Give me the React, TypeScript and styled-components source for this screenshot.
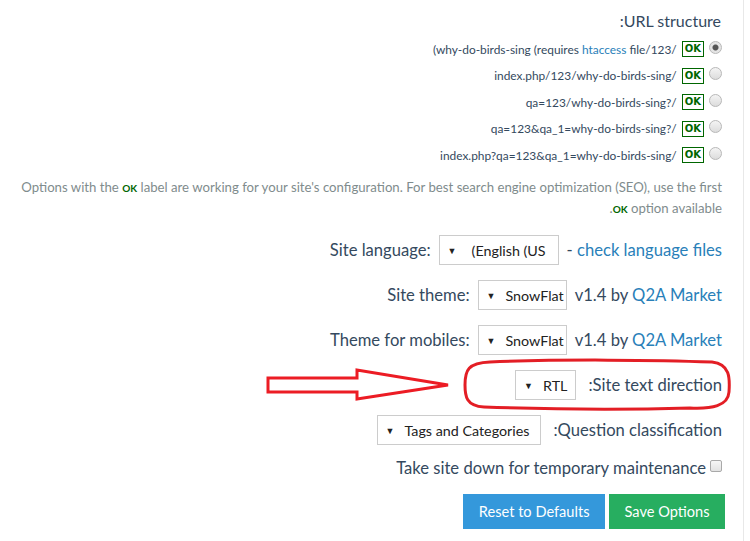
import styled, { createGlobalStyle } from 'styled-components';

const GlobalStyle = createGlobalStyle`
  html, body {
    margin: 0;
    padding: 0;
    background: #ffffff;
  }
  body {
    font-family: Lato, "Open Sans", sans-serif;
    color: #34495e;
  }
`;

interface UrlOption {
  id: string;
  before: string;
  link?: string;
  after?: string;
  checked: boolean;
}

const urlOptions: UrlOption[] = [
  { id: 'rewrite', before: '(why-do-birds-sing (requires ', link: 'htaccess', after: ' file/123/', checked: true },
  { id: 'index-path', before: 'index.php/123/why-do-birds-sing/', checked: false },
  { id: 'qa-path', before: 'qa=123/why-do-birds-sing?/', checked: false },
  { id: 'qa-params', before: 'qa=123&qa_1=why-do-birds-sing?/', checked: false },
  { id: 'index-params', before: 'index.php?qa=123&qa_1=why-do-birds-sing/', checked: false },
];

const Select = ({ value, width, padEnd = 10 }: { value: string; width: number; padEnd?: number }) => (
  <SelectBox style={{ minWidth: width, paddingRight: padEnd }}>
    <Caret>▼</Caret>
    <SelectValue>{value}</SelectValue>
  </SelectBox>
);

const App = () => {
  return (
    <>
      <GlobalStyle />
      <Page>
        <Form>
          <Title>:URL structure</Title>

          {urlOptions.map((opt) => (
            <RadioRow key={opt.id}>
              <span>
                {opt.before}
                {opt.link && <Link>{opt.link}</Link>}
                {opt.after}
              </span>
              <OkBadge>OK</OkBadge>
              <Radio checked={opt.checked} />
            </RadioRow>
          ))}

          <Note>
            <NoteLine>
              Options with the <SmallOk>OK</SmallOk> label are working for your site's configuration. For best search
              engine optimization (SEO), use the first
            </NoteLine>
            <NoteLine>
              .<SmallOk>OK</SmallOk> option available
            </NoteLine>
          </Note>

          <Fields>
            <FieldRow>
              <Label>Site language:</Label>
              <Select value="(English (US" width={120} padEnd={12} />
              <span>
                - <Link>check language files</Link>
              </span>
            </FieldRow>

            <FieldRow>
              <Label>Site theme:</Label>
              <Select value="SnowFlat" width={84} padEnd={2} />
              <span>
                v1.4 by <Link>Q2A Market</Link>
              </span>
            </FieldRow>

            <FieldRow>
              <Label>Theme for mobiles:</Label>
              <Select value="SnowFlat" width={84} padEnd={2} />
              <span>
                v1.4 by <Link>Q2A Market</Link>
              </span>
            </FieldRow>

            <FieldRow $gap={12}>
              <Select value="RTL" width={60} padEnd={8} />
              <Label>:Site text direction</Label>
            </FieldRow>

            <FieldRow $gap={12}>
              <Select value="Tags and Categories" width={164} padEnd={11} />
              <Label>:Question classification</Label>
            </FieldRow>
          </Fields>

          <CheckRow>
            <Label>Take site down for temporary maintenance</Label>
            <Checkbox />
          </CheckRow>

          <Buttons>
            <Button $color="#3498db">Reset to Defaults</Button>
            <Button $color="#27ae60">Save Options</Button>
          </Buttons>
        </Form>

        {/* red markup: arrow pointing at the direction setting */}
        <Markup width="750" height="541" viewBox="0 0 750 541">
          <polygon
            points="268,378 357,378 357,370 448,385 357,399 357,392 268,392"
            fill="none"
            stroke="#ec1c24"
            strokeWidth="3"
            strokeLinejoin="miter"
          />
          <path
            d="M490 362 C 560 359, 660 360, 712 362 C 730 364, 730 378, 729 392 C 728 406, 712 409, 690 408
               C 620 410, 540 409, 484 407 C 466 406, 465 396, 465 385 C 465 370, 468 363, 490 362 Z"
            fill="none"
            stroke="#e31e25"
            strokeWidth="3"
          />
        </Markup>
      </Page>
    </>
  );
};

export default App;

const Page = styled.div`
  position: relative;
  width: 750px;
  height: 541px;
  overflow: hidden;
`;

const Form = styled.div`
  width: 744px;
  height: 541px;
  box-sizing: border-box;
  border-right: 1px solid #e8e8e8;
  padding: 10px 21px 0 10px;
  display: flex;
  flex-direction: column;
  align-items: stretch;
`;

const Title = styled.div`
  height: 26px;
  line-height: 22px;
  font-size: 16px;
  text-align: right;
  padding-right: 1px;
`;

const RadioRow = styled.div`
  height: 26.5px;
  display: flex;
  justify-content: flex-end;
  align-items: center;
  font-size: 11.9px;
  white-space: nowrap;
`;

const Link = styled.span`
  color: #2980b9;
`;

const OkBadge = styled.span`
  margin-left: 5px;
  border: 1px solid #006600;
  color: #006600;
  font-weight: bold;
  font-size: 10px;
  line-height: 14px;
  padding: 0 2px;
  font-family: "DejaVu Sans", sans-serif;
`;

const Radio = styled.span<{ checked: boolean }>`
  margin-left: 5px;
  width: 11px;
  height: 11px;
  border-radius: 50%;
  border: 1px solid #b8b8b8;
  background: ${(p) =>
    p.checked
      ? 'radial-gradient(circle, #555 0, #555 2.5px, #e4e4e4 3.5px)'
      : 'linear-gradient(#f4f4f4, #dcdcdc)'};
  margin-top: -4px;
`;

const Note = styled.div`
  margin-top: 8px;
  font-size: 13.2px;
  line-height: 20px;
  color: #7f8c8d;
  text-align: right;
`;

const NoteLine = styled.div`
  white-space: nowrap;
`;

const SmallOk = styled.span`
  color: #006600;
  font-weight: bold;
  font-size: 10px;
`;

const Fields = styled.div`
  margin-top: 9px;
  display: flex;
  flex-direction: column;
`;

const FieldRow = styled.div<{ $gap?: number }>`
  height: 45px;
  display: flex;
  justify-content: flex-end;
  align-items: center;
  gap: ${(p) => p.$gap ?? 8}px;
  font-size: 16.6px;
  white-space: nowrap;
`;

const Label = styled.span``;

const SelectBox = styled.div`
  height: 30px;
  box-sizing: border-box;
  border: 1px solid #cccccc;
  display: flex;
  align-items: center;
  padding-left: 8px;
  font-size: 14.3px;
  color: #222;
  background: #fff;
`;

const Caret = styled.span`
  font-size: 9px;
  margin-right: 10px;
`;

const SelectValue = styled.span`
  flex: 1;
  text-align: right;
`;

const CheckRow = styled.div`
  height: 31px;
  display: flex;
  justify-content: flex-end;
  align-items: center;
  gap: 4px;
  font-size: 16.6px;
  white-space: nowrap;
`;

const Checkbox = styled.span`
  width: 10px;
  height: 10px;
  border: 1px solid #a9a9a9;
  border-radius: 2px;
  background: linear-gradient(#f6f6f6, #e2e2e2);
  margin-top: -4px;
`;

const Buttons = styled.div`
  margin-top: 10px;
  margin-right: -3px;
  display: flex;
  justify-content: flex-end;
  gap: 4px;
`;

const Button = styled.button<{ $color: string }>`
  height: 35px;
  border: none;
  background: ${(p) => p.$color};
  color: #ffffff;
  font-family: Lato, "Open Sans", sans-serif;
  font-size: 14.6px;
  padding: 0 15.5px;
  cursor: pointer;
`;

const Markup = styled.svg`
  position: absolute;
  left: 0;
  top: 0;
  pointer-events: none;
`;
